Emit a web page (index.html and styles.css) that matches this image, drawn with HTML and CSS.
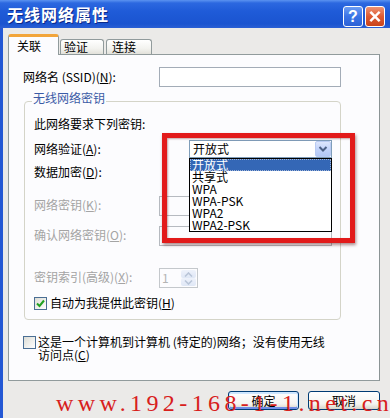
FILE: index.html
```html
<!DOCTYPE html>
<html>
<head>
<meta charset="utf-8">
<title>无线网络属性</title>
<link rel="stylesheet" href="styles.css">
</head>
<body>
<div class="window">
  <div class="titlebar">
    <span class="title">无线网络属性</span>
    <div class="tb-buttons">
      <span class="tb-btn help">?</span>
      <span class="tb-btn close"><svg width="19" height="19" viewBox="0 0 19 19"><path d="M5.5 5.5 L13.5 13.5 M13.5 5.5 L5.5 13.5" stroke="#fff" stroke-width="2.6" stroke-linecap="square"/></svg></span>
    </div>
  </div>
  <div class="client">
    <div class="tabs">
      <div class="tab active">关联</div>
      <div class="tab t2">验证</div>
      <div class="tab t3">连接</div>
    </div>
    <div class="panel">
      <div class="ssid-row">
        <span class="lbl-ssid">网络名 (SSID)(<u>N</u>):</span>
        <span class="edit ssid-edit"></span>
      </div>
      <div class="group">
        <div class="group-title">无线网络密钥</div>
        <div class="note">此网络要求下列密钥:</div>
        <div class="frow auth-row">
          <span class="flbl wide">网络验证(<u>A</u>):</span>
          <div class="select">
            <span class="sel-text">开放式</span>
            <span class="sel-btn"><svg width="14" height="14" viewBox="0 0 14 14"><path d="M3.5 5 L7 8.5 L10.5 5" stroke="#4d6185" stroke-width="2" fill="none"/></svg></span>
            <ul class="dropdown">
              <li class="hl">开放式</li>
              <li>共享式</li>
              <li>WPA</li>
              <li>WPA-PSK</li>
              <li>WPA2</li>
              <li>WPA2-PSK</li>
            </ul>
          </div>
        </div>
        <div class="frow data-row">
          <span class="flbl wide">数据加密(<u>D</u>):</span>
          <div class="select under"></div>
        </div>
        <div class="frow key-row">
          <span class="flbl dis">网络密钥(<u>K</u>):</span>
          <span class="edit dis-edit"></span>
        </div>
        <div class="frow confirm-row">
          <span class="flbl dis">确认网络密钥(<u>O</u>):</span>
          <span class="edit dis-edit"></span>
        </div>
        <div class="frow spin-row">
          <span class="flbl dis">密钥索引(高级)(<u>X</u>):</span>
          <span class="spin">
            <span class="spin-val">1</span>
            <span class="spin-btns">
              <span class="spin-b"><svg width="9" height="5" viewBox="0 0 9 5"><path d="M1 4.5 L4.5 1 L8 4.5" stroke="#b9c5d8" stroke-width="1.6" fill="none"/></svg></span>
              <span class="spin-b"><svg width="9" height="5" viewBox="0 0 9 5"><path d="M1 0.5 L4.5 4 L8 0.5" stroke="#b9c5d8" stroke-width="1.6" fill="none"/></svg></span>
            </span>
          </span>
        </div>
        <div class="check-row">
          <span class="cb checked"><svg width="11" height="11" viewBox="0 0 11 11"><path d="M2 5.5 L4.5 8 L9 2.5" stroke="#21a121" stroke-width="2" fill="none"/></svg></span>
          <span class="cb-text">自动为我提供此密钥(<u>H</u>)</span>
        </div>
      </div>
      <div class="adhoc">
        <span class="cb"></span>
        <span class="adhoc-text">这是一个计算机到计算机 (特定的)网络；没有使用无线<br>访问点(<u>C</u>)</span>
      </div>
    </div>
    <div class="buttons">
      <button class="btn default">确定</button>
      <button class="btn">取消</button>
    </div>
  </div>
  <div class="annot"></div>
  <div class="watermark">www.192-168-1-1.net.cn</div>
</div>
</body>
</html>
```
FILE: styles.css
```css
* { box-sizing: border-box; margin: 0; padding: 0; }
html, body { width: 390px; height: 418px; overflow: hidden; }
body {
  font-family: "Noto Sans CJK SC", "Liberation Sans", sans-serif;
  font-size: 12px;
  color: #000;
  background: #ebeae7;
}
u { text-decoration: underline; text-underline-offset: 1px; }

.window {
  position: relative;
  width: 390px;
  height: 418px;
  display: flex;
  flex-direction: column;
  background: #ebeae8;
}

/* title bar */
.titlebar {
  height: 28px;
  flex: none;
  display: flex;
  justify-content: space-between;
  background: linear-gradient(to bottom, #5b93f0 0, #2c68e0 3px, #1f5bd8 40%, #1a54d0 85%, #2a5fd4 100%);
  padding-left: 7px;
  padding-right: 5px;
}
.title {
  color: #fff;
  font-weight: bold;
  font-size: 16px;
  line-height: 29px;
  letter-spacing: 1px;
  text-shadow: 1px 1px 0 #0b2a8a;
}
.tb-buttons { display: flex; gap: 2px; padding-top: 6px; }
.tb-btn {
  width: 20px;
  height: 21px;
  border: 1px solid #fff;
  border-radius: 3px;
  display: flex;
  align-items: center;
  justify-content: center;
}
.help {
  background: linear-gradient(to bottom, #6c9cf2, #3a73e6 50%, #2e62d6);
  color: #fff;
  font: bold 16px/1 "Liberation Sans", sans-serif;
}
.close {
  background: linear-gradient(to bottom, #ee9272, #dd5a32 50%, #c9441c);
}

/* client */
.client {
  flex: 1;
  border-left: 3px solid #2458d4;
  padding-left: 5px;
  display: flex;
  flex-direction: column;
}

.tabs {
  margin-top: 6px;
  height: 21px;
  display: flex;
  align-items: flex-end;
  gap: 2px;
}
.tab {
  height: 15px;
  margin-bottom: 1px;
  border: 1px solid #919b9c;
  border-bottom: none;
  border-radius: 3px 3px 0 0;
  background: linear-gradient(to bottom, #ffffff, #f3f3ef 60%, #e2e1da);
  line-height: 14px;
  font-size: 12px;
  padding-left: 3px;
}
.tab.active {
  position: relative;
  z-index: 1;
  height: 21px;
  margin-bottom: 0;
  width: 51px;
  margin-right: -1px;
  border-top: 3px solid #f2a53a;
  background: #fcfcfe;
  padding-left: 8px;
  line-height: 17px;
}
.tab.t2 { width: 44px; }
.tab.t3 { width: 46px; padding-left: 5px; }

.panel {
  margin-top: -1px;
  width: 372px;
  height: 327px;
  border: 1px solid #919b9c;
  border-right-color: #8b9495;
  background: #fcfcfe;
  padding-top: 12px;
}

.ssid-row {
  display: flex;
  padding-left: 14px;
  height: 20px;
}
.lbl-ssid { width: 136px; line-height: 20px; }
.edit {
  display: block;
  height: 20px;
  border: 1px solid #a3acb7;
  background: #fff;
}
.ssid-edit { width: 182px; }

.group {
  margin: 14px 0 0 15px;
  width: 317px;
  height: 219px;
  border: 1px solid #d4d4c8;
  border-radius: 4px;
  padding-left: 9px;
}
.group-title {
  width: max-content;
  margin: -11px 0 0 -2px;
  padding: 0 1px;
  line-height: 14px;
  background: #fcfcfe;
  color: #3b5ba6;
}
.note { margin-top: 12px; line-height: 14px; }

.frow { display: flex; align-items: flex-start; }
.flbl { width: 125px; line-height: 18px; }
.flbl.wide { width: 155px; }
.flbl.dis { color: #a4a4a4; }

.auth-row { margin-top: 9px; height: 18px; }
.data-row { margin-top: 5px; height: 18px; }
.key-row { margin-top: 15px; height: 20px; }
.confirm-row { margin-top: 10px; height: 20px; }
.spin-row { margin-top: 22px; height: 20px; }

.select {
  position: relative;
  width: 143px;
  height: 18px;
  border: 1px solid #7f9db9;
  background: #fff;
  display: flex;
  justify-content: space-between;
}
.select.under { border-color: #a3acb7; }
.sel-text { padding-left: 3px; line-height: 16px; }
.sel-btn {
  width: 16px;
  height: 16px;
  border: 1px solid #b9cbf3;
  border-radius: 2px;
  background: linear-gradient(to bottom, #dde6fc, #c3d4fb 50%, #b3c8f5);
  display: flex;
  align-items: center;
  justify-content: center;
}
.dropdown {
  position: absolute;
  z-index: 5;
  left: -1px;
  top: 17px;
  width: 143px;
  height: 74px;
  border: 1px solid #000;
  background: #fff;
  list-style: none;
}
.dropdown li {
  height: 12px;
  line-height: 12px;
  padding-left: 2px;
  white-space: nowrap;
}
.dropdown li.hl {
  background: #3467b6;
  color: #fff;
  outline: 1px dotted #9fb3d6;
  outline-offset: -1px;
}

.dis-edit { width: 173px; background: transparent; border-color: #b6bac0; }

.spin {
  width: 39px;
  height: 20px;
  border: 1px solid #c4c8cc;
  display: flex;
  justify-content: space-between;
}
.spin-val { color: #b4b4b4; padding-left: 2px; line-height: 18px; }
.spin-btns { width: 16px; display: flex; flex-direction: column; padding: 1px 1px 1px 0; }
.spin-b {
  flex: 1;
  background: linear-gradient(to bottom, #eef2fb, #dfe7f6);
  border-radius: 2px;
  display: flex;
  align-items: center;
  justify-content: center;
}

.check-row {
  margin-top: 8px;
  height: 14px;
  display: flex;
  align-items: center;
}
.cb {
  width: 13px;
  height: 13px;
  flex: none;
  border: 1px solid #4a6e94;
  background: linear-gradient(135deg, #dcdcd5, #fff);
  display: flex;
  align-items: center;
  justify-content: center;
}
.cb-text { margin-left: 3px; line-height: 14px; }

.adhoc {
  margin-top: 16px;
  padding-left: 14px;
  display: flex;
  align-items: flex-start;
}
.adhoc-text {
  margin-left: 2px;
  margin-top: -1px;
  line-height: 13px;
  white-space: nowrap;
}

.buttons {
  width: 372px;
  margin-top: 10px;
  display: flex;
  justify-content: flex-end;
  gap: 9px;
}
.btn {
  width: 72px;
  height: 19px;
  border: 1px solid #003c74;
  border-radius: 3px;
  background: linear-gradient(to bottom, #ffffff, #f4f4f0 70%, #d8d4c8);
  font-family: "Noto Sans CJK SC", sans-serif;
  font-size: 12px;
  line-height: 15px;
  color: #000;
}
.btn.default {
  width: 71px;
  box-shadow: inset 0 1px 0 1px #cee7ff, inset 0 -1px 0 1px #6f8ee6;
}

/* annotation overlays */
.annot {
  position: absolute;
  left: 162px;
  top: 133px;
  width: 193px;
  height: 110px;
  border: 5px solid #e21a1a;
  box-shadow: 1px 2px 3px rgba(70, 0, 0, 0.45), inset 1px 1px 2px rgba(90, 0, 0, 0.35);
  z-index: 8;
}
.watermark {
  position: absolute;
  z-index: 9;
  left: 56px;
  top: 391px;
  font-family: "Liberation Serif", serif;
  font-size: 24px;
  line-height: 24px;
  letter-spacing: 4.4px;
  color: #d8201c;
  white-space: nowrap;
}
```
